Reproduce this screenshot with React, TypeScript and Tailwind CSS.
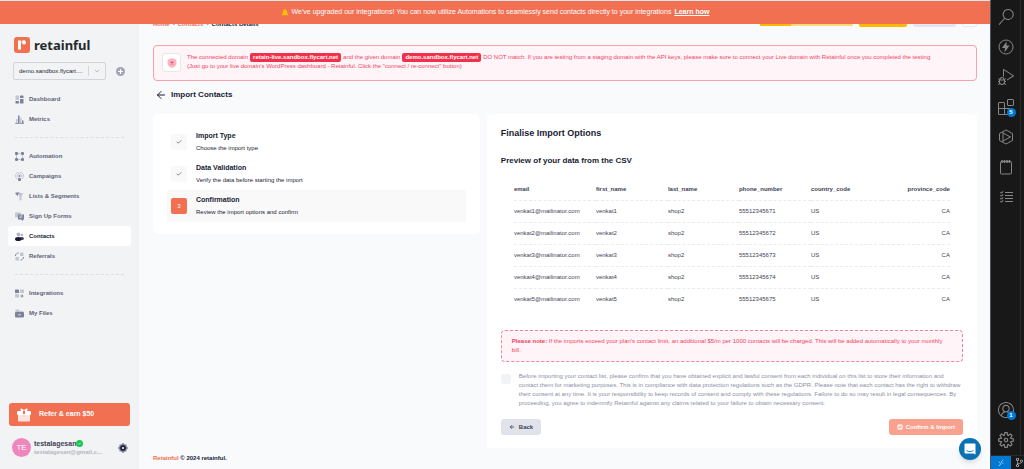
import type { ReactNode } from "react";
import {
  VscAccount,
  VscChecklist,
  VscDebugAlt,
  VscExtensions,
  VscRemote,
  VscSearch,
  VscSettingsGear,
  VscSourceControl,
} from "react-icons/vsc";
import { ArrowLeft, Check, ChevronDown } from "lucide-react";

const Icon = ({ children, className = "size-[9px]" }: { children: ReactNode; className?: string }) => (
  <svg viewBox="0 0 18 18" className={`shrink-0 ${className}`} aria-hidden="true">
    {children}
  </svg>
);

const DARK = "#7e8299";
const LIGHT = "#c3c6d4";

const icons = {
  dashboard: (
    <Icon>
      <rect x="1" y="1" width="7" height="9" rx="1" fill={LIGHT} />
      <rect x="10" y="1" width="7" height="5" rx="1" fill={DARK} />
      <rect x="1" y="12" width="7" height="5" rx="1" fill={DARK} />
      <rect x="10" y="8" width="7" height="9" rx="1" fill={DARK} />
    </Icon>
  ),
  metrics: (
    <Icon>
      <rect x="2" y="8" width="3" height="8" fill={LIGHT} />
      <rect x="6" y="1" width="3" height="15" fill={DARK} />
      <rect x="10" y="5" width="3" height="11" fill={LIGHT} />
      <rect x="14" y="11" width="3" height="5" fill={DARK} />
      <rect x="0" y="16" width="18" height="1.5" fill={DARK} />
    </Icon>
  ),
  automation: (
    <Icon>
      <rect x="3" y="3" width="12" height="12" fill="none" stroke={LIGHT} strokeWidth="2" />
      <rect x="0" y="0" width="6" height="6" rx="2" fill={DARK} />
      <rect x="12" y="0" width="6" height="6" rx="2" fill={DARK} />
      <rect x="0" y="12" width="6" height="6" rx="2" fill={DARK} />
      <rect x="12" y="12" width="6" height="6" rx="2" fill={DARK} />
    </Icon>
  ),
  campaigns: (
    <Icon>
      <path d="M4 14a8 8 0 1 1 10 0M6 11a4.500 4.500 0 1 1 6 0" fill="none" stroke={LIGHT} strokeWidth="1.800" />
      <circle cx="9" cy="8" r="2" fill={DARK} />
      <rect x="6" y="12" width="6" height="6" rx="2" fill={DARK} />
    </Icon>
  ),
  lists: (
    <Icon>
      <path d="M4 2h13l-4 7v8l-4-1V9z" fill={LIGHT} />
      <path d="M1 1h9L6 4v4L1 4z" fill={DARK} />
    </Icon>
  ),
  forms: (
    <Icon>
      <rect x="0" y="1" width="12" height="10" rx="1" fill={LIGHT} />
      <path d="M6 5h12v10h-2v3l-4-3H6z" fill={DARK} />
      <path d="M9 8h6M9 11h4" stroke="#f1f3f5" strokeWidth="1.500" />
    </Icon>
  ),
  contacts: (
    <Icon>
      <circle cx="7" cy="5" r="4" fill="#b5b5c3" />
      <circle cx="14" cy="6" r="2.500" fill="#b5b5c3" />
      <ellipse cx="13.500" cy="13" rx="4.500" ry="3" fill="#3f4254" />
      <ellipse cx="6.500" cy="14" rx="6.500" ry="4" fill="#181c32" />
    </Icon>
  ),
  referrals: (
    <Icon>
      <rect x="10" y="1" width="7" height="7" rx="1" fill={LIGHT} />
      <rect x="1" y="10" width="7" height="7" rx="1" fill={LIGHT} />
      <path d="M1 8c0-4 2-6 6-6M17 10c0 4-2 6-6 6" fill="none" stroke={DARK} strokeWidth="2" strokeDasharray="4 1.500" />
    </Icon>
  ),
  integrations: (
    <Icon>
      <rect x="0" y="1" width="8" height="7" rx="1" fill={DARK} />
      <rect x="10" y="1" width="8" height="7" rx="1" fill={LIGHT} />
      <rect x="0" y="10" width="8" height="7" rx="1" fill={LIGHT} />
      <path d="M14 11v6M11 14h6" stroke={DARK} strokeWidth="1.800" />
    </Icon>
  ),
  files: (
    <Icon>
      <path d="M1 3a2 2 0 0 1 2-2h5l2 3h5a2 2 0 0 1 2 2v3H1z" fill={LIGHT} />
      <rect x="0" y="6" width="18" height="11" rx="2" fill={DARK} />
      <path d="M6 11.500h6" stroke="#f1f3f5" strokeWidth="1.500" />
    </Icon>
  ),
};

const navGroups = [
  [
    { label: "Dashboard", icon: icons.dashboard },
    { label: "Metrics", icon: icons.metrics },
  ],
  [
    { label: "Automation", icon: icons.automation },
    { label: "Campaigns", icon: icons.campaigns },
    { label: "Lists & Segments", icon: icons.lists },
    { label: "Sign Up Forms", icon: icons.forms },
    { label: "Contacts", icon: icons.contacts, active: true },
    { label: "Referrals", icon: icons.referrals },
  ],
  [
    { label: "Integrations", icon: icons.integrations },
    { label: "My Files", icon: icons.files },
  ],
];

const steps = [
  { title: "Import Type", text: "Choose the import type", done: true },
  { title: "Data Validation", text: "Verify the data before starting the import", done: true },
  { title: "Confirmation", text: "Review the import options and confirm", done: false },
];

const columns = ["email", "first_name", "last_name", "phone_number", "country_code", "province_code"];

const rows = [1, 2, 3, 4, 5].map((n) => [
  `venkat${n}@mailinator.com`,
  `venkat${n}`,
  "shop2",
  `5551234567${n}`,
  "US",
  "CA",
]);

const Banner = () => (
  <div className="relative z-10 flex h-6 shrink-0 items-center justify-center border-t border-gray-200 bg-[#f27052] text-[7px] text-white">
    <svg viewBox="0 0 18 18" className="mr-[3px] size-2" aria-hidden="true">
      <path d="M9 0c1 0 1.500.7 1.500 1.600C13 2.500 14 5 14 8c0 3 1 4 3 6H1c2-2 3-3 3-6 0-3 1-5.500 3.500-6.400C7.500.7 8 0 9 0z" fill="#ffc107" />
      <path d="M6.500 15h5a2.500 2.500 0 0 1-5 0z" fill="#e0a000" />
    </svg>
    <span>
      We've upgraded our integrations! You can now utilize Automations to seamlessly send contacts directly to your
      integrations
    </span>
    <a href="#" className="ml-[3px] font-bold underline">
      Learn how
    </a>
  </div>
);

const Sidebar = () => (
  <aside className="flex w-[139px] shrink-0 flex-col bg-[#f1f3f5] px-2 pt-3">
    <div className="flex h-[18px] items-center gap-1 pl-[6px]">
      <svg viewBox="0 0 32 32" className="size-4" aria-hidden="true">
        <rect width="32" height="32" rx="6" fill="#f27052" />
        <path d="M8 7h6v18H8z" fill="#fff" />
        <path d="M14 11c2-3 5-4 8-3" fill="none" stroke="#fff" strokeWidth="2" />
        <circle cx="20" cy="11" r="4" fill="#fff" />
      </svg>
      <span className="font-['Noto_Sans'] text-[13px] leading-4 font-bold text-[#25282b]">retainful</span>
    </div>

    <div className="mt-2 flex items-center gap-[10px] pl-[5px]">
      <button className="flex h-[18px] w-[93px] items-center rounded-[2px] border border-gray-300 pr-1 pl-[5px] text-[6px] text-gray-800">
        <span className="flex-1 text-left">demo.sandbox.flycart....</span>
        <span className="h-[10px] border-l border-gray-300 pr-1" />
        <ChevronDown className="size-2 text-gray-400" />
      </button>
      <button aria-label="Add store">
        <Icon>
          <circle cx="9" cy="9" r="9" fill="#a1a5b7" />
          <path d="M9 4v10M4 9h10" stroke="#fff" strokeWidth="2" />
        </Icon>
      </button>
    </div>

    <nav className="mt-[9px]">
      {navGroups.map((group, i) => (
        <div key={i}>
          {i > 0 && <div className="mx-[7px] my-2 border-t border-dashed border-[#dbdfe9]" />}
          {group.map(({ label, icon, active }: { label: string; icon: ReactNode; active?: boolean }) => (
            <a
              key={label}
              href="#"
              className={`flex h-5 items-center gap-[5px] rounded-[3px] pl-[7px] text-[6px] font-bold ${
                active ? "bg-white text-[#181c32]" : "text-[#5e6278]"
              }`}
            >
              {icon}
              {label}
            </a>
          ))}
        </div>
      ))}
    </nav>

    <button className="mx-px mt-auto flex h-[23px] shrink-0 items-center gap-2 rounded-[3px] bg-[#f27052] pl-2 text-[7px] font-bold text-white">
      <svg viewBox="0 0 28 28" className="size-[14px]" aria-hidden="true">
        <rect x="2" y="12" width="24" height="15" rx="2" fill="#fde3dc" />
        <rect x="0" y="6" width="28" height="8" rx="2" fill="#fff" />
        <path d="M8 6c-4-7 4-7 6 0 2-7 10-7 6 0z" fill="#fff" />
        <path d="M12 6h4v7l-2-2-2 2z" fill="#f27052" />
      </svg>
      Refer &amp; earn $50
    </button>

    <div className="flex h-[43px] items-center pl-1">
      <div className="flex size-[19px] items-center justify-center rounded-full bg-[#ef87be] text-[8px] text-white">TE</div>
      <div className="ml-[3px] flex-1 leading-2">
        <div className="flex items-center text-[7px] font-bold text-[#3f4254]">
          testalagesan
          <svg viewBox="0 0 16 16" className="size-[7px]" aria-hidden="true">
            <circle cx="8" cy="8" r="8" fill="#17c653" />
            <path d="M5 8l2 2 4-4" fill="none" stroke="#fff" strokeWidth="1.500" />
          </svg>
        </div>
        <div className="text-[6px] font-bold text-[#b5b5c3]">testalagesan@gmail.c...</div>
      </div>
      <button aria-label="Account settings" className="mr-[3px]">
        <Icon className="size-[10px]">
          <circle cx="9" cy="9" r="7" fill={DARK} />
          <path d="M9 0v18M0 9h18M3 3l12 12M15 3L3 15" stroke={DARK} strokeWidth="2.500" />
          <circle cx="9" cy="9" r="5" fill="#181c32" />
          <circle cx="9" cy="9" r="2" fill="#fff" />
        </Icon>
      </button>
    </div>
  </aside>
);

const Toolbar = () => (
  <div className="-mt-[6px] flex h-3 justify-between text-[6px] leading-3 font-bold">
    <div className="flex gap-[3px]">
      <a href="#" className="text-[#f27052]">
        Home
      </a>
      <span className="text-gray-400">•</span>
      <a href="#" className="text-[#f27052]">
        Contacts
      </a>
      <span className="text-gray-400">•</span>
      <span className="text-[#181c32]">Contacts Details</span>
    </div>
    <div className="flex gap-[6px]">
      <div className="h-2 w-[93px] bg-[#ffd87a]">
        <div className="h-full w-1/3 bg-[#ffb800]" />
      </div>
      <button aria-label="Upgrade" className="h-[9px] w-12 rounded-[2px] bg-[#ffb800]" />
      <button aria-label="Help" className="h-[9px] w-[43px] rounded-[2px] bg-[#e4e6ef]" />
      <button aria-label="Menu" className="h-[9px] w-[15px] rounded-[3px] border border-gray-200 bg-white" />
    </div>
  </div>
);

const Domain = ({ children }: { children: ReactNode }) => (
  <span className="rounded-[2px] bg-[#f1304c] px-[3px] leading-[9px] font-bold text-white">{children}</span>
);

const DomainAlert = () => (
  <div className="mt-[15px] flex h-9 gap-[6px] rounded-[4px] border border-[#f8a0ab] bg-[#fff5f8] pt-[7px] pl-2 text-[6px] leading-[9px] text-[#f1415f]">
    <div className="flex size-[19px] shrink-0 items-center justify-center rounded-[3px] border border-gray-200 bg-white">
      <Icon className="size-[10px]">
        <path d="M9 0l8 3v7c0 4-4 7-8 8-4-1-8-4-8-8V3z" fill="#fbb6c2" />
        <path d="M6.500 6.500l5 5M11.500 6.500l-5 5" stroke="#f1416c" strokeWidth="2" />
      </Icon>
    </div>
    <div>
      <p className="flex items-center gap-[2px]">
        <span>The connected domain</span>
        <Domain>retain-live.sandbox.flycart.net</Domain>
        <span>and the given domain</span>
        <Domain>demo.sandbox.flycart.net</Domain>
        <span>
          DO NOT match. If you are testing from a staging domain with the API keys, please make sure to connect your Live
          domain with Retainful once you completed the testing
        </span>
      </p>
      <p>(Just go to your live domain's WordPress dashboard - Retainful. Click the "connect / re-connect" button)</p>
    </div>
  </div>
);

const Steps = () => (
  <section className="rounded-[5px] bg-white px-[14px] py-3">
    {steps.map(({ title, text, done }, i) => (
      <div key={title} className={`flex h-8 items-center gap-[9px] pl-1 ${done ? "" : "bg-[#f9f9f9]"}`}>
        <div
          className={`flex size-4 items-center justify-center rounded-[2px] text-[6px] ${
            done ? "bg-[#f9f9f9] text-[#5e6278]" : "bg-[#f27052] text-white"
          }`}
        >
          {done ? <Check className="size-[6px]" strokeWidth={3} /> : i + 1}
        </div>
        <div className="text-[#181c32]">
          <h3 className="text-[7px] leading-3 font-bold">{title}</h3>
          <p className="text-[6px] leading-3">{text}</p>
        </div>
      </div>
    ))}
  </section>
);

const PreviewTable = () => (
  <table className="mx-auto mt-3 w-[436px] table-fixed text-left text-[6px] text-[#3f4254]">
    <colgroup>
      <col className="w-[82px]" />
      <col className="w-[72px]" />
      <col className="w-[71px]" />
      <col className="w-[72px]" />
      <col className="w-[71px]" />
      <col />
    </colgroup>
    <thead>
      <tr className="h-[21px] border-b border-dashed border-[#e9ebf0]">
        {columns.map((column) => (
          <th key={column} className="last:text-right">
            {column}
          </th>
        ))}
      </tr>
    </thead>
    <tbody>
      {rows.map((row) => (
        <tr key={row[0]} className="h-[22px] border-b border-dashed border-[#e9ebf0] last:border-0">
          {row.map((cell, i) => (
            <td key={i} className="last:text-right">
              {cell}
            </td>
          ))}
        </tr>
      ))}
    </tbody>
  </table>
);

const ImportOptions = () => (
  <section className="min-w-0 rounded-[5px] bg-white px-[14px] pt-3 pb-[13px] text-[#181c32]">
    <h1 className="text-[9px] leading-[14px] font-bold">Finalise Import Options</h1>
    <h2 className="mt-[15px] text-[8px] leading-3 font-bold">Preview of your data from the CSV</h2>
    <PreviewTable />

    <p className="mt-5 rounded-[4px] border border-dashed border-[#f7809a] bg-[#fff5f8] px-[10px] py-[6px] text-[6px] leading-[9px] text-[#f1415f]">
      <b>Please note:</b> If the imports exceed your plan's contact limit, an additional $5/m per 1000 contacts will be
      charged. This will be added automatically to your monthly bill.
    </p>

    <div className="mt-[10px] flex gap-2 text-[6px] leading-[9px] text-[#8b8fa5]">
      <input
        id="consent"
        type="checkbox"
        className="mt-[2px] size-[10px] shrink-0 appearance-none rounded-[3px] bg-[#f1f3f5]"
      />
      <label htmlFor="consent">
        Before importing your contact list, please confirm that you have obtained explicit and lawful consent from each
        individual on this list to store their information and contact them for marketing purposes. This is in
        compliance with data protection regulations such as the GDPR. Please note that each contact has the right to
        withdraw their consent at any time. It is your responsibility to keep records of consent and comply with these
        regulations. Failure to do so may result in legal consequences. By proceeding, you agree to indemnify Retainful
        against any claims related to your failure to obtain necessary consent.
      </label>
    </div>

    <div className="mt-[11px] flex justify-between text-[6px] font-bold">
      <button className="flex h-4 items-center gap-1 rounded-[3px] bg-[#e1e3ea] px-2 text-[#3f4254]">
        <ArrowLeft className="size-[6px]" strokeWidth={3} />
        Back
      </button>
      <button className="flex h-4 items-center gap-[3px] rounded-[3px] bg-[#f9a18f] px-2 text-white">
        <svg viewBox="0 0 12 12" className="size-[6px]" aria-hidden="true">
          <circle cx="6" cy="6" r="6" fill="#fde3dc" />
          <path d="M3 6l2 2 4-4" fill="none" stroke="#f58a74" strokeWidth="1.800" />
        </svg>
        Confirm &amp; Import
      </button>
    </div>
  </section>
);

const Badge = ({ children }: { children: ReactNode }) => (
  <span className="absolute -right-[2px] -bottom-[2px] flex size-[9px] items-center justify-center rounded-full bg-[#0078d4] text-[6px] font-bold text-white">
    {children}
  </span>
);

const ThunderIcon = () => (
  <svg viewBox="0 0 32 32" className="size-4" aria-hidden="true">
    <circle cx="16" cy="16" r="14" fill="none" stroke="currentColor" strokeWidth="2" />
    <path d="M17 5L8 18h6l-1 9 10-14h-6z" fill="currentColor" />
  </svg>
);

const HexagonIcon = () => (
  <svg viewBox="0 0 32 32" className="size-4" fill="none" stroke="currentColor" strokeWidth="2" aria-hidden="true">
    <path d="M16 2l13 7v14l-13 7-13-7V9z" />
    <path d="M10 6v20M10 8l15 8-15 8" />
  </svg>
);

const NotepadIcon = () => (
  <svg viewBox="0 0 32 32" className="size-4" fill="none" stroke="currentColor" strokeWidth="2" aria-hidden="true">
    <rect x="5" y="5" width="22" height="25" rx="2" />
    <path d="M8 2v6M13 2v6M18 2v6M23 2v6" strokeWidth="3" />
  </svg>
);

const activities = [
  { label: "Search", icon: <VscSearch className="size-4" /> },
  { label: "Thunder Client", icon: <ThunderIcon /> },
  { label: "Run and Debug", icon: <VscDebugAlt className="size-4" /> },
  { label: "Extensions", icon: <VscExtensions className="size-4" />, badge: 5 },
  { label: "Runner", icon: <HexagonIcon /> },
  { label: "Notes", icon: <NotepadIcon /> },
  { label: "Tasks", icon: <VscChecklist className="size-4" /> },
];

const ActivityBar = () => (
  <aside className="flex w-[34px] shrink-0 flex-col border-l border-gray-600 bg-[#181818] text-[#868686]">
    <div className="flex min-h-0 flex-1">
      <div className="flex w-[30px] flex-col items-center border-r border-[#2b2b2b] pt-[2px]">
        {activities.map(({ label, icon, badge }) => (
          <button key={label} aria-label={label} className="flex h-[30px] items-center">
            <span className="relative">
              {icon}
              {badge && <Badge>{badge}</Badge>}
            </span>
          </button>
        ))}
        <button aria-label="Accounts" className="mt-auto flex h-[30px] items-center">
          <span className="relative">
            <VscAccount className="size-4" />
            <Badge>1</Badge>
          </span>
        </button>
        <button aria-label="Manage" className="flex h-[30px] items-center">
          <VscSettingsGear className="size-4" />
        </button>
      </div>
    </div>
    <div className="flex h-[14px] items-center overflow-hidden border-t border-[#2b2b2b] text-gray-300">
      <div className="flex h-full w-5 shrink-0 items-center justify-center bg-[#0078d4] text-white">
        <VscRemote className="size-2" />
      </div>
      <VscSourceControl className="ml-1 size-[9px] shrink-0" />
    </div>
  </aside>
);

const App = () => (
  <div className="flex h-screen overflow-hidden font-['Liberation_Sans',Arial,sans-serif]">
    <div className="relative flex min-w-0 flex-1 flex-col">
      <Banner />
      <div className="flex min-h-0 flex-1">
        <Sidebar />
        <main className="flex min-w-0 flex-1 flex-col bg-[#f8fafc] pr-[13px] pl-[14px]">
          <Toolbar />
          <DomainAlert />
          <div className="flex h-[33px] shrink-0 items-center gap-1 pb-[5px] pl-[2px] text-[8px] font-bold text-[#181c32]">
            <ArrowLeft className="size-3" />
            Import Contacts
          </div>
          <div className="grid grid-cols-[2fr_3fr] items-start gap-[7px]">
            <Steps />
            <ImportOptions />
          </div>
          <footer className="mt-[5px] text-[6px] leading-[10px] font-bold text-[#181c32]">
            <a href="#" className="text-[#f27052]">
              Retainful
            </a>{" "}
            © 2024 retainful.
          </footer>
        </main>
      </div>
      <button
        aria-label="Open chat"
        className="absolute right-[9px] bottom-[9px] flex size-[22px] items-center justify-center rounded-full bg-[#0b71b5] shadow-md"
      >
        <svg viewBox="0 0 24 24" className="size-3" aria-hidden="true">
          <path d="M3 1h18a2 2 0 0 1 2 2v20l-4-2H3a2 2 0 0 1-2-2V3a2 2 0 0 1 2-2z" fill="#fff" />
          <path d="M5 15c4 3 10 3 14 0" fill="none" stroke="#0b71b5" strokeWidth="1.800" />
        </svg>
      </button>
    </div>
    <ActivityBar />
  </div>
);

export default App;
